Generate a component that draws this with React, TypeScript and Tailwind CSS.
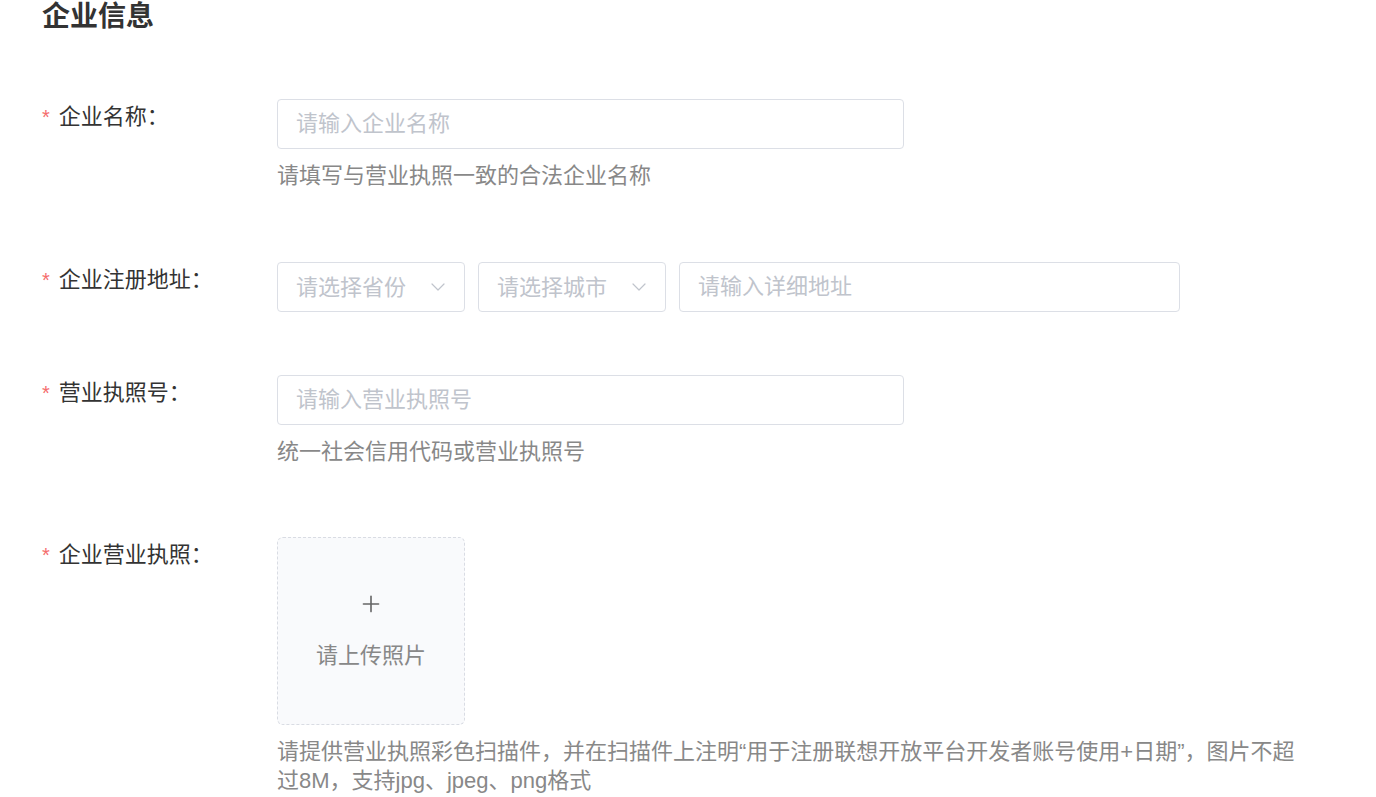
import { ChevronDown, Plus } from "lucide-react";

const font = "font-['Liberation_Sans','Noto_Sans_CJK_SC',sans-serif]";

function Label({ text }: { text: string }) {
  return (
    <div className="w-[235px] shrink-0 pt-[3px] text-[22px] leading-[30px] text-[#333]">
      <span className="mr-[9px] text-[20px] text-[#f56c6c]">*</span>
      {text}：
    </div>
  );
}

function TextInput({ placeholder, width }: { placeholder: string; width: string }) {
  return (
    <input
      placeholder={placeholder}
      className={`${width} h-[50px] rounded-[4px] border border-[#dcdfe6] bg-white px-[18px] text-[22px] text-[#333] outline-none placeholder:text-[#c0c4cc]`}
    />
  );
}

function Select({ placeholder }: { placeholder: string }) {
  return (
    <div className="flex h-[50px] w-[188px] items-center justify-between rounded-[4px] border border-[#dcdfe6] bg-white pl-[18px] pr-[14px]">
      <span className="text-[22px] text-[#c0c4cc]">{placeholder}</span>
      <ChevronDown className="h-[24px] w-[24px] text-[#c0c4cc]" strokeWidth={1.2} />
    </div>
  );
}

function Help({ children }: { children: React.ReactNode }) {
  return <p className="mt-[12px] w-[1020px] text-[22px] leading-[29px] text-[#888]">{children}</p>;
}

export default function App() {
  return (
    <div className={`${font} min-h-[797px] bg-white pl-[42px]`}>
      <h1 className="text-[28px] font-bold leading-[34px] text-[#333]">企业信息</h1>

      {/* 企业名称 */}
      <div className="mt-[65px] flex">
        <Label text="企业名称" />
        <div>
          <TextInput placeholder="请输入企业名称" width="w-[627px]" />
          <Help>请填写与营业执照一致的合法企业名称</Help>
        </div>
      </div>

      {/* 注册地址 */}
      <div className="mt-[72px] flex">
        <Label text="企业注册地址" />
        <div className="flex gap-[13px]">
          <Select placeholder="请选择省份" />
          <Select placeholder="请选择城市" />
          <TextInput placeholder="请输入详细地址" width="w-[501px]" />
        </div>
      </div>

      {/* 营业执照号 */}
      <div className="mt-[63px] flex">
        <Label text="营业执照号" />
        <div>
          <TextInput placeholder="请输入营业执照号" width="w-[627px]" />
          <Help>统一社会信用代码或营业执照号</Help>
        </div>
      </div>

      {/* 营业执照 */}
      <div className="mt-[71px] flex">
        <Label text="企业营业执照" />
        <div>
          <div className="flex h-[188px] w-[188px] flex-col items-center rounded-[6px] border border-dashed border-[#d9dce3] bg-[#f9fafc]">
            <Plus className="mt-[53px] h-[26px] w-[26px] text-[#666]" strokeWidth={1.5} />
            <span className="mt-[24px] text-[22px] leading-[30px] text-[#888]">请上传照片</span>
          </div>
          <Help>
            请提供营业执照彩色扫描件，并在扫描件上注明“用于注册联想开放平台开发者账号使用+日期”，图片不超过8M，支持jpg、jpeg、png格式
          </Help>
        </div>
      </div>
    </div>
  );
}
